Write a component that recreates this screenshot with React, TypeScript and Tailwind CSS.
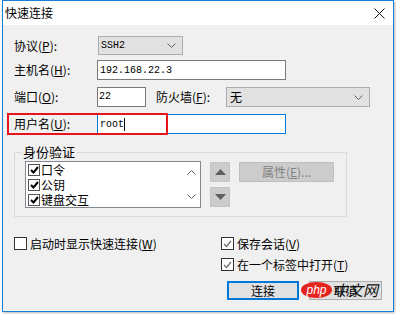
import React from 'react';

function Key({ k }: { k: string }) {
  return (
    <span>
      (<u className="underline-offset-[1px]">{k}</u>)
    </span>
  );
}

function Chevron({ className = '' }: { className?: string }) {
  return (
    <svg width="9" height="5" viewBox="0 0 9 5" className={className}>
      <path d="M0.5 0.5 L4.5 4.5 L8.5 0.5" fill="none" stroke="#5f5f5f" strokeWidth="1" />
    </svg>
  );
}

function Check({ checked, gray }: { checked: boolean; gray?: boolean }) {
  return (
    <div className="w-[13px] h-[13px] border border-[#333333] bg-white flex items-center justify-center shrink-0">
      {checked && (
        <svg width="9" height="8" viewBox="0 0 9 8">
          <path d="M1 4 L3.5 6.5 L8 1" fill="none" stroke={gray ? '#6f6f6f' : '#000'} strokeWidth={gray ? 1.3 : 2} />
        </svg>
      )}
    </div>
  );
}

function ListItem({ label }: { label: string }) {
  return (
    <div className="h-[17px] flex items-center gap-[1px]">
      <div className="w-[12px] h-[12px] border border-[#555] bg-white flex items-center justify-center">
        <svg width="9" height="8" viewBox="0 0 9 8">
          <path d="M1 4 L3.5 6.5 L8 1" fill="none" stroke="#000" strokeWidth="2" />
        </svg>
      </div>
      <span className="leading-[15px] text-[12px]">{label}</span>
    </div>
  );
}

export default function App() {
  return (
    <div className="w-[396px] h-[314px] bg-white overflow-hidden font-['Noto_Sans_CJK_SC',sans-serif] text-[12px] text-black">
      <div className="ml-[2px] w-[392px] h-[312px] border border-[#1a7fd4] bg-[#f0f0f0] shadow-[1px_1px_3px_rgba(0,0,0,0.3)] flex flex-col">
        {/* title bar */}
        <div className="h-[24px] bg-white flex items-center justify-between pl-[2px] pr-[8px]">
          <span className="text-[12px] leading-[16px]">快速连接</span>
          <svg width="11" height="11" viewBox="0 0 11 11">
            <path d="M0.5 0.5 L10.5 10.5 M10.5 0.5 L0.5 10.5" stroke="#111" strokeWidth="1" />
          </svg>
        </div>

        <div className="flex flex-col pl-[11px] relative">
          {/* protocol */}
          <div className="mt-[11px] h-[19px] flex items-center">
            <span className="w-[84px] leading-[16px]">协议<Key k="P" />:</span>
            <div className="w-[85px] h-[19px] border border-[#adadad] bg-[#e1e1e1] flex items-center justify-between pl-[2px] pr-[6px]">
              <span className="font-['Liberation_Mono',monospace] text-[10px]">SSH2</span>
              <Chevron />
            </div>
          </div>

          {/* host */}
          <div className="mt-[5px] h-[20px] flex items-center">
            <span className="w-[83px] leading-[16px]">主机名<Key k="H" />:</span>
            <div className="w-[189px] h-[20px] border border-[#7a7a7a] bg-white flex items-center pl-[2px]">
              <span className="font-['Liberation_Mono',monospace] text-[10px]">192.168.22.3</span>
            </div>
          </div>

          {/* port / firewall */}
          <div className="mt-[7px] h-[20px] flex items-center">
            <span className="w-[83px] leading-[16px]">端口<Key k="O" />:</span>
            <div className="w-[49px] h-[20px] border border-[#7a7a7a] bg-white flex items-start pl-[1px] pt-[1px]">
              <span className="font-['Liberation_Mono',monospace] text-[10px]">22</span>
            </div>
            <span className="ml-[10px] w-[70px] leading-[16px]">防火墙<Key k="F" />:</span>
            <div className="w-[144px] h-[20px] border border-[#adadad] bg-[#e1e1e1] flex items-center justify-between pl-[3px] pr-[6px]">
              <span className="text-[12px] leading-[16px]">无</span>
              <Chevron />
            </div>
          </div>

          {/* user */}
          <div className="mt-[7px] h-[20px] flex items-center relative">
            <div className="absolute left-[-7px] top-[-1px] w-[161px] h-[22px] border-2 border-[#e8141c]" />
            <span className="w-[83px] leading-[16px]">用户名<Key k="U" />:</span>
            <div className="w-[189px] h-[20px] border border-[#0078d7] bg-white flex items-center pl-[2px]">
              <span className="font-['Liberation_Mono',monospace] text-[10px]">root</span>
              <span className="w-[1px] h-[13px] bg-black" />
            </div>
          </div>

          {/* auth group */}
          <div className="mt-[18px] w-[333px] h-[65px] border border-[#dcdcdc] relative">
            <span className="absolute left-[7px] top-[-9px] bg-[#f0f0f0] px-[1px] text-[13px] leading-[16px]">身份验证</span>
            <div className="flex items-start pt-[8px] pl-[10px]">
              <div className="w-[176px] h-[47px] border border-[#828790] bg-white overflow-hidden flex">
                <div className="flex-1 flex flex-col pl-[2px]">
                  <ListItem label="口令" />
                  <ListItem label="公钥" />
                  <ListItem label="键盘交互" />
                </div>
                <div className="w-[17px] flex flex-col items-center justify-between pt-[8px] pb-[8px]">
                  <Chevron className="rotate-180" />
                  <Chevron />
                </div>
              </div>
              <div className="ml-[9px] mt-[1px] flex flex-col gap-[5px]">
                <div className="w-[20px] h-[20px] bg-[#cccccc] border border-[#c4c4c4] flex items-center justify-center">
                  <svg width="11" height="6" viewBox="0 0 11 6"><path d="M0 6 L5.5 0 L11 6 Z" fill="#5e5e5e" /></svg>
                </div>
                <div className="w-[20px] h-[20px] bg-[#cccccc] border border-[#c4c4c4] flex items-center justify-center">
                  <svg width="11" height="6" viewBox="0 0 11 6"><path d="M0 0 L5.5 6 L11 0 Z" fill="#5e5e5e" /></svg>
                </div>
              </div>
              <div className="ml-[9px] mt-[1px] w-[95px] h-[20px] bg-[#cccccc] border border-[#bfbfbf] flex items-center justify-center text-[#838383] leading-[16px]">
                属性<Key k="E" />...
              </div>
            </div>
          </div>

          {/* options */}
          <div className="mt-[20px] h-[13px] flex items-center">
            <div className="w-[207px] flex items-center gap-[3px]">
              <Check checked={false} />
              <span className="leading-[16px]">启动时显示快速连接<Key k="W" /></span>
            </div>
            <div className="flex items-center gap-[3px]">
              <Check checked gray />
              <span className="leading-[16px]">保存会话<Key k="V" /></span>
            </div>
          </div>
          <div className="mt-[8px] h-[13px] flex items-center pl-[207px] gap-[3px]">
            <Check checked gray />
            <span className="leading-[16px]">在一个标签中打开<Key k="T" /></span>
          </div>

          {/* buttons */}
          <div className="mt-[10px] flex items-center pl-[213px]">
            <div className="w-[72px] h-[19px] border-2 border-[#0078d7] bg-[#e1e1e1] flex items-center justify-center leading-[15px]">连接</div>
            <div className="ml-[10px] w-[73px] h-[19px] border border-[#adadad] bg-[#e1e1e1] flex items-center justify-center leading-[15px]">取消</div>
          </div>

          {/* watermark */}
          <div className="absolute left-[298px] top-[257px] flex items-center">
            <div className="w-[31px] h-[16px] rounded-[50%] bg-[#e52420] flex items-center justify-center">
              <span className="font-['Liberation_Sans',sans-serif] text-white text-[12px] leading-[12px] italic">php</span>
            </div>
            <span className="ml-[1px] text-[15px] leading-[16px] italic text-[#111]">中文网</span>
          </div>
        </div>
      </div>
    </div>
  );
}
